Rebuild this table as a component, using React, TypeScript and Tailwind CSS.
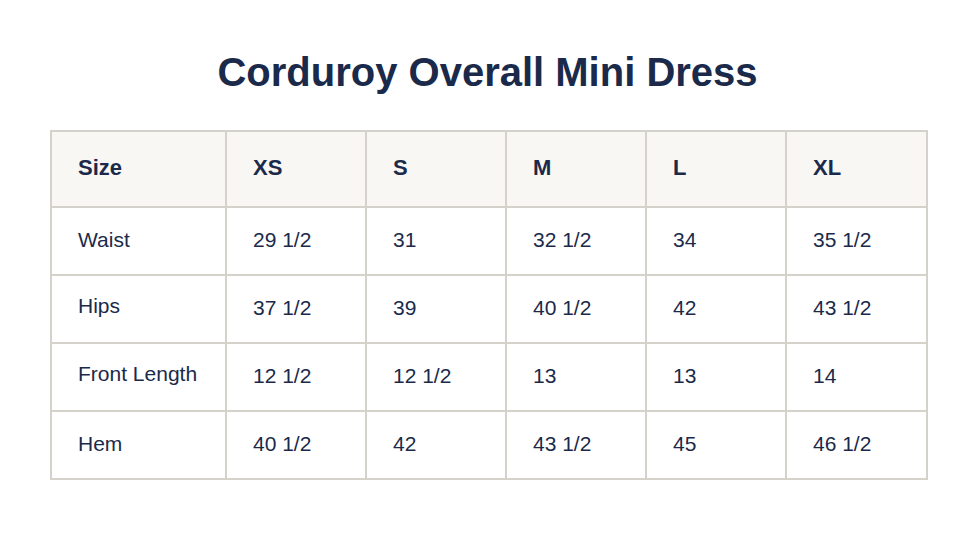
import React from "react";

const sizes = ["XS", "S", "M", "L", "XL"];

// lift = label sits a little higher than the values in that row
const rows: { label: string; values: string[]; lift?: boolean }[] = [
  { label: "Waist", values: ["29 1/2", "31", "32 1/2", "34", "35 1/2"] },
  { label: "Hips", values: ["37 1/2", "39", "40 1/2", "42", "43 1/2"], lift: true },
  { label: "Front Length", values: ["12 1/2", "12 1/2", "13", "13", "14"], lift: true },
  { label: "Hem", values: ["40 1/2", "42", "43 1/2", "45", "46 1/2"] },
];

const App = () => {
  return (
    <div className="min-h-[548px] w-full bg-white pt-[49px] font-['Liberation_Sans',Arial,sans-serif] text-[#1b2a4a]">
      <h1 className="text-center text-[40px] font-bold leading-[46px]">Corduroy Overall Mini Dress</h1>
      <div className="mt-[35px] flex pl-[50px]">
        <table className="w-[876px] table-fixed border-collapse border-2 border-[#d5d2cc]">
          <colgroup>
            <col className="w-[175px]" />
            <col className="w-[140px]" />
            <col className="w-[140px]" />
            <col className="w-[140px]" />
            <col className="w-[140px]" />
            <col className="w-[141px]" />
          </colgroup>
          <thead>
            <tr className="bg-[#f9f7f3]">
              <th className="h-[76px] border-2 border-[#d5d2cc] px-[26px] pb-[3px] text-left text-[22px] font-bold">
                Size
              </th>
              {sizes.map((s) => (
                <th
                  key={s}
                  className="h-[76px] border-2 border-[#d5d2cc] px-[26px] pb-[4px] text-left text-[22px] font-bold"
                >
                  {s}
                </th>
              ))}
            </tr>
          </thead>
          <tbody>
            {rows.map((row) => (
              <tr key={row.label}>
                <td
                  className={`h-[68px] border-2 border-[#d5d2cc] px-[26px] text-[21px] ${row.lift ? "pb-[6px]" : "pb-[2px]"}`}
                >
                  {row.label}
                </td>
                {row.values.map((v, i) => (
                  <td key={i} className="h-[68px] border-2 border-[#d5d2cc] px-[26px] pb-[2px] text-[21px]">
                    {v}
                  </td>
                ))}
              </tr>
            ))}
          </tbody>
        </table>
      </div>
    </div>
  );
};

export default App;
